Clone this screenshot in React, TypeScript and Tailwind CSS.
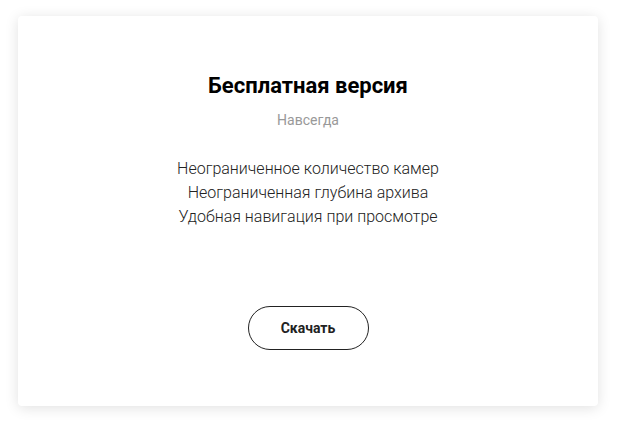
export default function App() {
	return (
		<div className="min-h-[431px] w-[624px] bg-white pl-[18px] pt-[16px] font-['Roboto',sans-serif]">
			<div className="flex h-[390px] w-[580px] flex-col items-center rounded-[4px] bg-white pt-[56px] shadow-[0_2px_14px_rgba(0,0,0,0.12)]">
				<h2 className="text-[22px] leading-[28px] font-bold text-black">Бесплатная версия</h2>
				<p className="mt-[10px] text-[14px] leading-[20px] text-[#999]">Навсегда</p>
				<ul className="mt-[27px] text-center text-[16px] leading-[24px] font-light text-[#222]">
					<li>Неограниченное количество камер</li>
					<li>Неограниченная глубина архива</li>
					<li>Удобная навигация при просмотре</li>
				</ul>
				<button className="mt-[77px] h-[44px] w-[121px] rounded-full border border-[#222] text-[14px] font-bold text-[#222]">
					Скачать
				</button>
			</div>
		</div>
	);
}
